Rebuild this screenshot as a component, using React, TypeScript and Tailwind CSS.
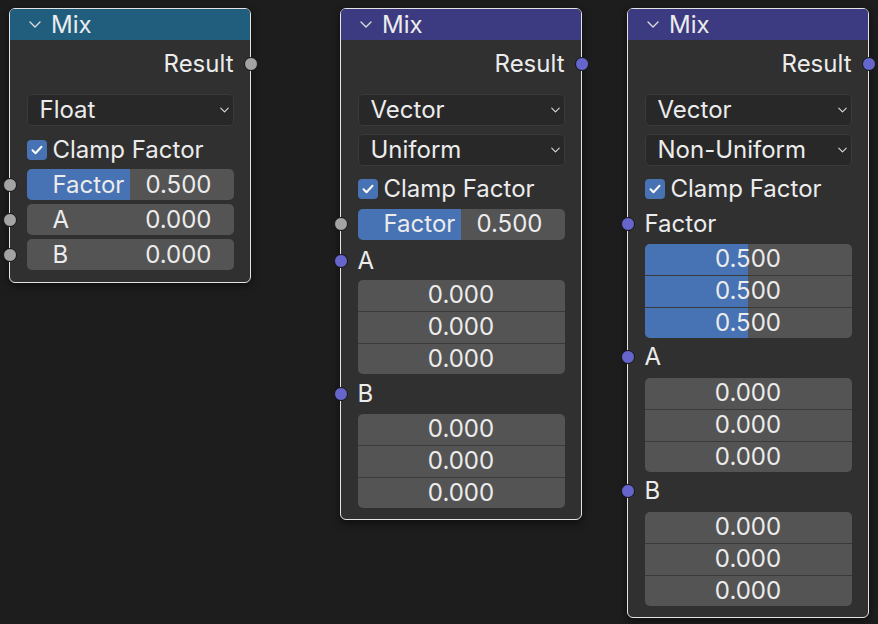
import React from "react";

type SockColor = "gray" | "vec";

function Socket({ side, color }: { side: "left" | "right"; color: SockColor }) {
  const c = color === "gray" ? "bg-[#a3a3a3]" : "bg-[#6565cc]";
  const s = side === "left" ? "left-[-24px]" : "right-[-24px]";
  return (
    <span
      className={`absolute top-1/2 -translate-y-1/2 w-[14px] h-[14px] rounded-full border border-[#161616] ${c} ${s}`}
    />
  );
}

function Chevron({ className }: { className: string }) {
  return (
    <svg className={className} viewBox="0 0 12 7" fill="none">
      <path d="M1 1l5 5 5-5" stroke="#dcdcdc" strokeWidth="1.4" strokeLinecap="round" strokeLinejoin="round" />
    </svg>
  );
}

function Header({ color }: { color: string }) {
  return (
    <div className={`h-[31px] rounded-t-[4.5px] flex items-center ${color}`}>
      <Chevron className="ml-[19px] w-[12px] h-[7px]" />
      <span className="ml-[10px] text-[24px] leading-none text-[#ececec]">Mix</span>
    </div>
  );
}

function ResultRow({ color }: { color: SockColor }) {
  return (
    <div className="relative mt-[9px] h-[30px] flex items-center justify-end">
      <span className="text-[24px] leading-none">Result</span>
      <Socket side="right" color={color} />
    </div>
  );
}

function Dropdown({ label, mt }: { label: string; mt: string }) {
  return (
    <div
      className={`${mt} h-[32px] rounded-[5px] bg-[#282828] border border-[#3a3a3a] flex items-center justify-between pl-[12px] pr-[4px]`}
    >
      <span className="text-[24px] leading-none">{label}</span>
      <Chevron className="w-[9px] h-[6px]" />
    </div>
  );
}

function Clamp({ mt }: { mt: string }) {
  return (
    <div className={`${mt} h-[26px] flex items-center`}>
      <span className="w-[20px] h-[20px] rounded-[4px] bg-[#4772b3] flex items-center justify-center">
        <svg viewBox="0 0 14 14" className="w-[14px] h-[14px]" fill="none">
          <path d="M2.5 7.2l3 3 6-6.5" stroke="#ffffff" strokeWidth="2" strokeLinecap="round" strokeLinejoin="round" />
        </svg>
      </span>
      <span className="ml-[6px] text-[24px] leading-none">Clamp Factor</span>
    </div>
  );
}

function Field({
  label,
  value,
  fill,
  mt,
  socket,
}: {
  label: string;
  value: string;
  fill?: boolean;
  mt: string;
  socket?: SockColor;
}) {
  return (
    <div className={`relative ${mt} h-[31px]`}>
      <div className="absolute inset-0 rounded-[5px] overflow-hidden bg-[#545454]">
        {fill && <div className="absolute inset-y-0 left-0 w-1/2 bg-[#4772b3]" />}
      </div>
      <div className="relative h-full flex items-center justify-between pl-[26px] pr-[22px]">
        <span className="text-[24px] leading-none">{label}</span>
        <span className="text-[24px] leading-none">{value}</span>
      </div>
      {socket && <Socket side="left" color={socket} />}
    </div>
  );
}

function LabelRow({ label, mt }: { label: string; mt: string }) {
  return (
    <div className={`relative ${mt} h-[30px] flex items-center`}>
      <span className="text-[24px] leading-none">{label}</span>
      <Socket side="left" color="vec" />
    </div>
  );
}

function VecField({ values, fill, mt }: { values: string[]; fill?: boolean; mt: string }) {
  return (
    <div className={`${mt} flex flex-col rounded-[5px] overflow-hidden bg-[#545454]`}>
      {values.map((v, i) => (
        <div
          key={i}
          className={`relative h-[31.5px] flex items-center justify-center ${i > 0 ? "border-t border-[#3a3a3a]" : ""}`}
        >
          {fill && <div className="absolute inset-y-0 left-0 w-1/2 bg-[#4772b3]" />}
          <span className="relative text-[24px] leading-none">{v}</span>
        </div>
      ))}
    </div>
  );
}

const nodeBase =
  "absolute top-[8px] w-[242px] rounded-[6px] border-[1.5px] border-[#e4e4e4] bg-[#303030] shadow-[0_3px_8px_rgba(0,0,0,0.55)]";

export default function App() {
  const zeros = ["0.000", "0.000", "0.000"];
  const halves = ["0.500", "0.500", "0.500"];
  return (
    <div className="relative w-[878px] h-[624px] overflow-hidden bg-[#1d1d1d] text-[#ececec] [font-family:Inter,sans-serif]">
      {/* Node 1: Float */}
      <div className={`${nodeBase} left-[9px]`}>
        <Header color="bg-[#215e7e]" />
        <div className="px-[16.5px] pb-[11.5px] flex flex-col">
          <ResultRow color="gray" />
          <Dropdown label="Float" mt="mt-[15px]" />
          <Clamp mt="mt-[11px]" />
          <Field label="Factor" value="0.500" fill mt="mt-[6px]" socket="gray" />
          <Field label="A" value="0.000" mt="mt-[4px]" socket="gray" />
          <Field label="B" value="0.000" mt="mt-[4px]" socket="gray" />
        </div>
      </div>

      {/* Node 2: Vector Uniform */}
      <div className={`${nodeBase} left-[340px]`}>
        <Header color="bg-[#3c3a80]" />
        <div className="px-[16.5px] pb-[11px] flex flex-col">
          <ResultRow color="vec" />
          <Dropdown label="Vector" mt="mt-[15px]" />
          <Dropdown label="Uniform" mt="mt-[8px]" />
          <Clamp mt="mt-[10px]" />
          <Field label="Factor" value="0.500" fill mt="mt-[6.5px]" socket="gray" />
          <LabelRow label="A" mt="mt-[6px]" />
          <VecField values={zeros} mt="mt-[4px]" />
          <LabelRow label="B" mt="mt-[4.5px]" />
          <VecField values={zeros} mt="mt-[5px]" />
        </div>
      </div>

      {/* Node 3: Vector Non-Uniform */}
      <div className={`${nodeBase} left-[627px]`}>
        <Header color="bg-[#3c3a80]" />
        <div className="px-[16.5px] pb-[10.5px] flex flex-col">
          <ResultRow color="vec" />
          <Dropdown label="Vector" mt="mt-[15px]" />
          <Dropdown label="Non-Uniform" mt="mt-[8px]" />
          <Clamp mt="mt-[10px]" />
          <LabelRow label="Factor" mt="mt-[6.5px]" />
          <VecField values={halves} fill mt="mt-[5px]" />
          <LabelRow label="A" mt="mt-[4px]" />
          <VecField values={zeros} mt="mt-[5.5px]" />
          <LabelRow label="B" mt="mt-[4px]" />
          <VecField values={zeros} mt="mt-[5.5px]" />
        </div>
      </div>
    </div>
  );
}
